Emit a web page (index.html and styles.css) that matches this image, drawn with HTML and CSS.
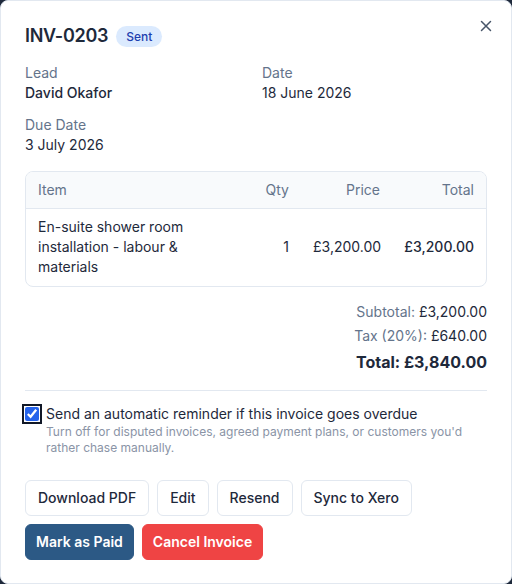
FILE: index.html
```html
<!DOCTYPE html>
<html lang="en">
<head>
    <meta charset="UTF-8">
    <meta name="viewport" content="width=device-width, initial-scale=1.0">
    <title>Invoice INV-0203</title>
    <link rel="stylesheet" href="styles.css">
</head>
<body>
    <div class="modal">
        <div class="modal-header">
            <h2 class="title">INV-0203</h2>
            <span class="badge">Sent</span>
            <button class="close" aria-label="Close">
                <svg width="12" height="12" viewBox="0 0 12 12"><path d="M1.5 1.5l9 9M10.5 1.5l-9 9" stroke="#475569" stroke-width="1.5" stroke-linecap="round"/></svg>
            </button>
        </div>

        <div class="meta">
            <div class="field">
                <div class="label">Lead</div>
                <div class="value strong">David Okafor</div>
            </div>
            <div class="field">
                <div class="label">Date</div>
                <div class="value">18 June 2026</div>
            </div>
            <div class="field">
                <div class="label">Due Date</div>
                <div class="value">3 July 2026</div>
            </div>
        </div>

        <div class="items">
            <table>
                <colgroup>
                    <col class="col-item">
                    <col class="col-qty">
                    <col class="col-price">
                    <col class="col-total">
                </colgroup>
                <thead>
                    <tr>
                        <th class="left">Item</th>
                        <th>Qty</th>
                        <th>Price</th>
                        <th>Total</th>
                    </tr>
                </thead>
                <tbody>
                    <tr>
                        <td class="left">En-suite shower room installation - labour &amp; materials</td>
                        <td>1</td>
                        <td>£3,200.00</td>
                        <td class="strong">£3,200.00</td>
                    </tr>
                </tbody>
            </table>
        </div>

        <div class="totals">
            <div><span class="muted">Subtotal:</span> £3,200.00</div>
            <div><span class="muted">Tax (20%):</span> £640.00</div>
            <div class="grand">Total: £3,840.00</div>
        </div>

        <label class="reminder">
            <input type="checkbox" checked>
            <span>
                <span class="reminder-title">Send an automatic reminder if this invoice goes overdue</span>
                <span class="hint">Turn off for disputed invoices, agreed payment plans, or customers you'd rather chase manually.</span>
            </span>
        </label>

        <div class="actions first">
            <button class="btn">Download PDF</button>
            <button class="btn">Edit</button>
            <button class="btn">Resend</button>
            <button class="btn">Sync to Xero</button>
        </div>
        <div class="actions">
            <button class="btn primary">Mark as Paid</button>
            <button class="btn danger">Cancel Invoice</button>
        </div>
    </div>
</body>
</html>
```

FILE: styles.css
```css
*{
    box-sizing: border-box;
}
body{
    margin: 0;
    background-color: #1e293b;
    font-family: Inter, "Noto Sans", Arial, sans-serif;
    color: #1e293b;
}
.modal{
    width: 512px;
    height: 584px;
    background-color: #fff;
    border: 1px solid #e2e8f0;
    border-radius: 8px;
    padding: 21px 24px 24px;
    position: relative;
}
.modal-header{
    display: flex;
    align-items: center;
    gap: 8px;
    margin-bottom: 13px;
}
.title{
    margin: 0;
    font-size: 18px;
    line-height: 28px;
    font-weight: 600;
    letter-spacing: -0.3px;
}
.badge{
    background-color: #dbeafe;
    color: #1e40af;
    font-size: 12px;
    font-weight: 500;
    line-height: 17px;
    padding: 2px 10px;
    border-radius: 999px;
}
.close{
    position: absolute;
    top: 18px;
    right: 18px;
    border: none;
    background: none;
    padding: 0;
    width: 14px;
    height: 14px;
    display: flex;
    align-items: center;
    justify-content: center;
    cursor: pointer;
}
.meta{
    display: grid;
    grid-template-columns: 1fr 1fr;
    column-gap: 12px;
    row-gap: 12px;
    font-size: 14px;
    line-height: 20px;
}
.label{
    color: #64748b;
}
.strong{
    font-weight: 500;
}
.items{
    margin-top: 16px;
    border: 1px solid #e2e8f0;
    border-radius: 8px;
    overflow: hidden;
}
table{
    width: 100%;
    border-collapse: collapse;
    table-layout: fixed;
    font-size: 14px;
}
.col-item{ width: 194px; }
.col-qty{ width: 81px; }
.col-price{ width: 91px; }
.col-total{ width: 94px; }
th{
    background-color: #f8fafc;
    color: #64748b;
    font-weight: 400;
    font-size: 14px;
    line-height: 16px;
    padding: 10px 12px;
    text-align: right;
    border-bottom: 1px solid #e2e8f0;
}
td{
    padding: 8px 12px 9px;
    line-height: 20px;
    text-align: right;
    vertical-align: middle;
}
th.left, td.left{
    text-align: left;
}
.totals{
    margin-top: 13px;
    text-align: right;
    font-size: 14px;
    line-height: 24px;
}
.muted{
    color: #64748b;
}
.grand{
    font-size: 16px;
    font-weight: 700;
    line-height: 28px;
}
.reminder{
    display: flex;
    align-items: flex-start;
    gap: 7px;
    margin-top: 14px;
    padding-top: 13px;
    border-top: 1px solid #e2e8f0;
    cursor: pointer;
}
.reminder input{
    margin: 3px 0 0 0;
    width: 14px;
    height: 14px;
    accent-color: #2563eb;
    outline: 2px solid #111827;
    outline-offset: 1px;
    border-radius: 3px;
    flex-shrink: 0;
}
.reminder-title{
    display: block;
    font-size: 14px;
    line-height: 20px;
}
.hint{
    display: block;
    font-size: 12px;
    line-height: 16px;
    color: #8a94a6;
}
.actions{
    display: flex;
    gap: 8px;
}
.actions.first{
    margin-top: 24px;
}
.actions + .actions{
    margin-top: 8px;
}
.btn{
    font-family: inherit;
    font-size: 14px;
    font-weight: 500;
    line-height: 20px;
    padding: 7px 12px;
    border: 1px solid #e2e8f0;
    border-radius: 6px;
    background-color: #fff;
    color: #1e293b;
    cursor: pointer;
}
.primary, .danger{
    color: #fff;
    font-weight: 600;
    padding: 7px 10px;
}
.primary{
    background-color: #2c5985;
    border-color: #2c5985;
}
.danger{
    background-color: #ef4444;
    border-color: #ef4444;
}
```
